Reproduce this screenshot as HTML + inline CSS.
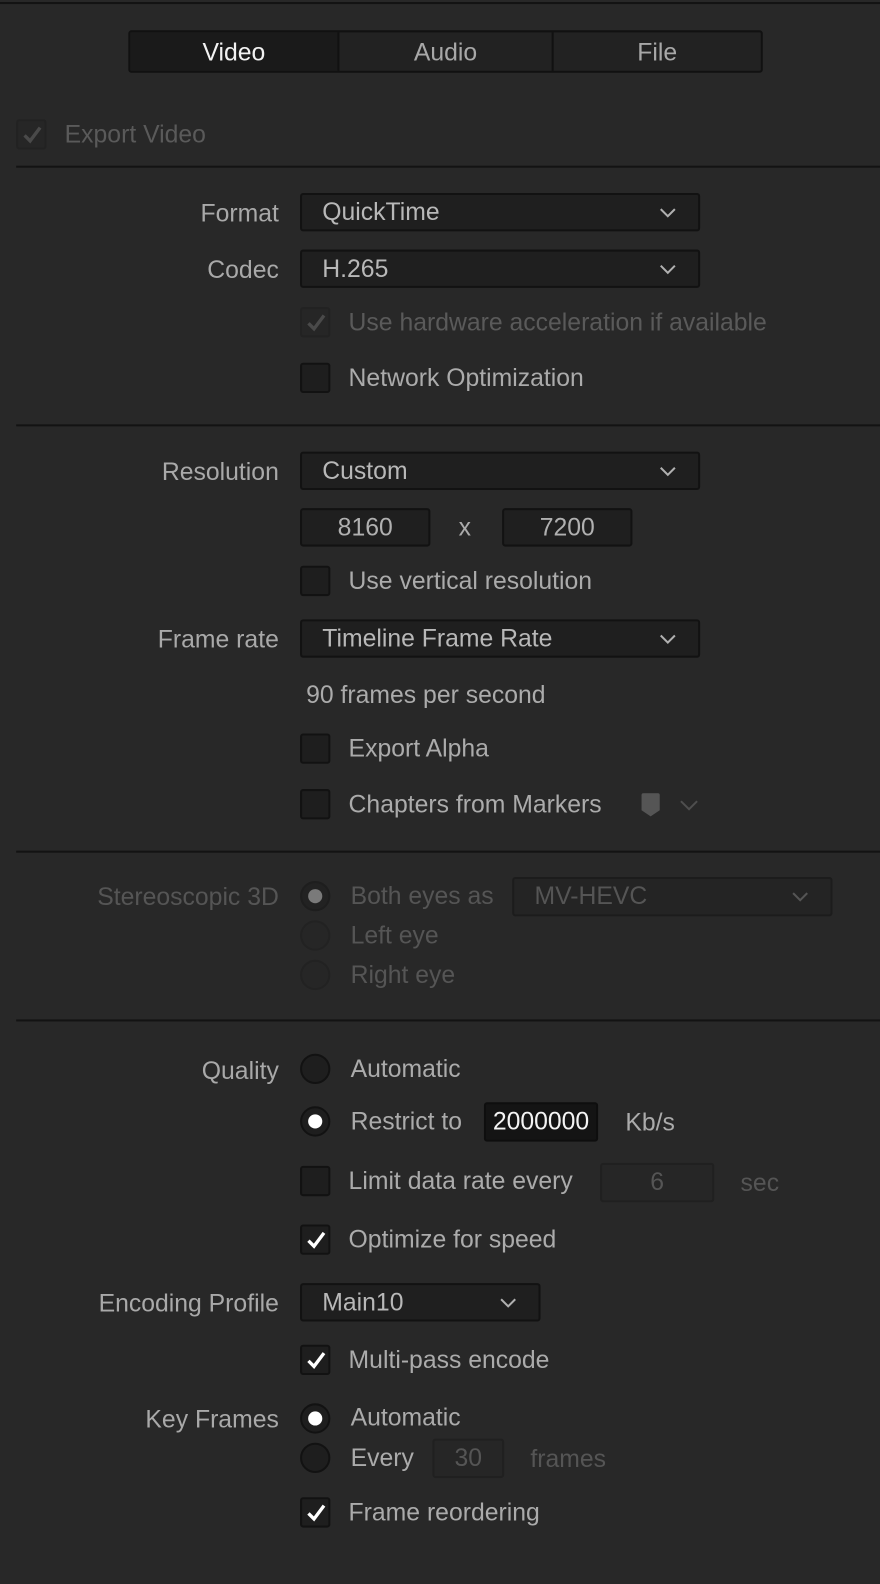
<!DOCTYPE html>
<html><head><meta charset="utf-8"><style>
html,body{margin:0;padding:0;}
body{width:880px;height:1584px;background:#282828;position:relative;overflow:hidden;font-family:"Liberation Sans",sans-serif;font-size:24.5px;color:#ababab;}
#w{position:absolute;left:0;top:0;width:871px;height:1568px;transform:scale(1.0103);transform-origin:0 0;}
.a{position:absolute;}
.t{position:absolute;height:30px;line-height:33px;white-space:nowrap;}
.lbl{position:absolute;right:595px;height:30px;line-height:33px;white-space:nowrap;color:#a9a9a9;}
.sep{position:absolute;left:16px;right:-20px;height:2px;background:#131313;}
.dd{position:absolute;background:#1f1f1f;border:2px solid #121212;border-radius:3px;box-sizing:border-box;color:#b8b8b8;line-height:36px;padding-left:20px;}
.chev{position:absolute;right:22px;top:13px;width:16px;height:10px;}
.inp{position:absolute;background:#1f1f1f;border:2px solid #121212;border-radius:3px;box-sizing:border-box;color:#b0b0b0;text-align:center;line-height:35px;}
.cb{position:absolute;left:297px;width:30px;height:30px;box-sizing:border-box;background:#1e1e1e;border:2px solid #121212;border-radius:3px;}
.cb svg{position:absolute;left:3px;top:3px;}
.rd{position:absolute;left:297px;width:30px;height:30px;box-sizing:border-box;border-radius:50%;background:#1e1e1e;border:2px solid #121212;}
.rd.on::after{content:"";position:absolute;left:6px;top:6px;width:14px;height:14px;border-radius:50%;background:#fff;}
</style></head><body><div id="w">
<div class="a" style="left:0;right:-20px;top:2px;height:2px;background:#131313"></div>

<div class="a" style="left:127px;top:30px;width:628px;height:42px;box-sizing:border-box;border:2px solid #111;border-radius:3px;background:#222;"></div>
<div class="a" style="left:129px;top:32px;width:205px;height:38px;background:#1a1a1a;"></div>
<div class="a" style="left:334px;top:32px;width:2px;height:38px;background:#111"></div>
<div class="a" style="left:546px;top:32px;width:2px;height:38px;background:#111"></div>
<div class="t" style="left:129px;width:205px;top:36px;text-align:center;color:#f2f2f2">Video</div>
<div class="t" style="left:336px;width:210px;top:36px;text-align:center;color:#a8a8a8">Audio</div>
<div class="t" style="left:548px;width:205px;top:36px;text-align:center;color:#a8a8a8">File</div>

<div class="cb" style="left:16px;top:118px;background:#262626;border-color:#222"><svg width="22" height="22" viewBox="0 0 20 20"><path d="M3 10 L8 15 L17 3" stroke="#4a4a4a" stroke-width="3" fill="none"/></svg></div>
<div class="t" style="left:64px;top:117px;color:#5a5a5a">Export Video</div>
<div class="sep" style="top:164px"></div>

<div class="lbl" style="top:195px">Format</div>
<div class="dd" style="left:297px;top:191px;width:396px;height:38px">QuickTime<svg class="chev" viewBox="0 0 16 10"><path d="M1 1 L8 8 L15 1" stroke="#b0b0b0" stroke-width="2" fill="none"/></svg></div>
<div class="lbl" style="top:251px">Codec</div>
<div class="dd" style="left:297px;top:247px;width:396px;height:38px">H.265<svg class="chev" viewBox="0 0 16 10"><path d="M1 1 L8 8 L15 1" stroke="#b0b0b0" stroke-width="2" fill="none"/></svg></div>
<div class="cb" style="top:304px;background:#262626;border-color:#222"><svg width="22" height="22" viewBox="0 0 20 20"><path d="M3 10 L8 15 L17 3" stroke="#4a4a4a" stroke-width="3" fill="none"/></svg></div>
<div class="t" style="left:345px;top:303px;color:#5a5a5a">Use hardware acceleration if available</div>
<div class="cb" style="top:359px"></div>
<div class="t" style="left:345px;top:358px">Network Optimization</div>
<div class="sep" style="top:420px"></div>

<div class="lbl" style="top:451px">Resolution</div>
<div class="dd" style="left:297px;top:447px;width:396px;height:38px">Custom<svg class="chev" viewBox="0 0 16 10"><path d="M1 1 L8 8 L15 1" stroke="#b0b0b0" stroke-width="2" fill="none"/></svg></div>
<div class="inp" style="left:297px;top:503px;width:129px;height:38px">8160</div>
<div class="t" style="left:454px;top:506px">x</div>
<div class="inp" style="left:497px;top:503px;width:129px;height:38px">7200</div>
<div class="cb" style="top:560px"></div>
<div class="t" style="left:345px;top:559px">Use vertical resolution</div>
<div class="lbl" style="top:617px">Frame rate</div>
<div class="dd" style="left:297px;top:613px;width:396px;height:38px">Timeline Frame Rate<svg class="chev" viewBox="0 0 16 10"><path d="M1 1 L8 8 L15 1" stroke="#b0b0b0" stroke-width="2" fill="none"/></svg></div>
<div class="t" style="left:303px;top:672px">90 frames per second</div>
<div class="cb" style="top:726px"></div>
<div class="t" style="left:345px;top:725px">Export Alpha</div>
<div class="cb" style="top:781px"></div>
<div class="t" style="left:345px;top:780px">Chapters from Markers</div>
<svg class="a" style="left:634px;top:785px" width="20" height="24" viewBox="0 0 20 24"><path d="M1 2 Q1 0 3 0 L17 0 Q19 0 19 2 L19 17 L10 23 L1 17 Z" fill="#555"/></svg>
<svg class="a" style="left:673px;top:792px" width="18" height="11" viewBox="0 0 18 11"><path d="M1 1 L9 9 L17 1" stroke="#4e4e4e" stroke-width="2" fill="none"/></svg>
<div class="sep" style="top:842px"></div>

<div class="lbl" style="top:872px;color:#555">Stereoscopic 3D</div>
<div class="rd" style="top:872px;background:#222;border-color:#1e1e1e"><div class="a" style="left:6px;top:6px;width:14px;height:14px;border-radius:50%;background:#7a7a7a"></div></div>
<div class="t" style="left:347px;top:871px;color:#555">Both eyes as</div>
<div class="dd" style="left:507px;top:868px;width:317px;height:39px;background:#242424;border-color:#1c1c1c;color:#555">MV-HEVC<svg class="chev" viewBox="0 0 16 10"><path d="M1 1 L8 8 L15 1" stroke="#555" stroke-width="2" fill="none"/></svg></div>
<div class="rd" style="top:911px;background:#262626;border-color:#222"></div>
<div class="t" style="left:347px;top:910px;color:#555">Left eye</div>
<div class="rd" style="top:950px;background:#262626;border-color:#222"></div>
<div class="t" style="left:347px;top:949px;color:#555">Right eye</div>
<div class="sep" style="top:1009px"></div>

<div class="lbl" style="top:1044px">Quality</div>
<div class="rd" style="top:1043px"></div>
<div class="t" style="left:347px;top:1042px">Automatic</div>
<div class="rd on" style="top:1095px"></div>
<div class="t" style="left:347px;top:1094px">Restrict to</div>
<div class="inp" style="left:479px;top:1091px;width:113px;height:39px;background:#141414;border-color:#0e0e0e;color:#f4f4f4">2000000</div>
<div class="t" style="left:619px;top:1095px">Kb/s</div>
<div class="cb" style="top:1154px"></div>
<div class="t" style="left:345px;top:1153px">Limit data rate every</div>
<div class="inp" style="left:594px;top:1151px;width:113px;height:39px;background:#262626;border-color:#202020;color:#555">6</div>
<div class="t" style="left:733px;top:1155px;color:#555">sec</div>
<div class="cb" style="top:1212px"><svg width="22" height="22" viewBox="0 0 20 20"><path d="M3 10 L8 15 L17 3" stroke="#fff" stroke-width="3" fill="none"/></svg></div>
<div class="t" style="left:345px;top:1211px">Optimize for speed</div>
<div class="lbl" style="top:1274px">Encoding Profile</div>
<div class="dd" style="left:297px;top:1270px;width:238px;height:38px">Main10<svg class="chev" viewBox="0 0 16 10"><path d="M1 1 L8 8 L15 1" stroke="#b0b0b0" stroke-width="2" fill="none"/></svg></div>
<div class="cb" style="top:1331px"><svg width="22" height="22" viewBox="0 0 20 20"><path d="M3 10 L8 15 L17 3" stroke="#fff" stroke-width="3" fill="none"/></svg></div>
<div class="t" style="left:345px;top:1330px">Multi-pass encode</div>
<div class="lbl" style="top:1389px">Key Frames</div>
<div class="rd on" style="top:1389px"></div>
<div class="t" style="left:347px;top:1387px">Automatic</div>
<div class="rd" style="top:1428px"></div>
<div class="t" style="left:347px;top:1427px">Every</div>
<div class="inp" style="left:428px;top:1424px;width:71px;height:39px;background:#262626;border-color:#202020;color:#555">30</div>
<div class="t" style="left:525px;top:1428px;color:#555">frames</div>
<div class="cb" style="top:1482px"><svg width="22" height="22" viewBox="0 0 20 20"><path d="M3 10 L8 15 L17 3" stroke="#fff" stroke-width="3" fill="none"/></svg></div>
<div class="t" style="left:345px;top:1481px">Frame reordering</div>
</div></body></html>
